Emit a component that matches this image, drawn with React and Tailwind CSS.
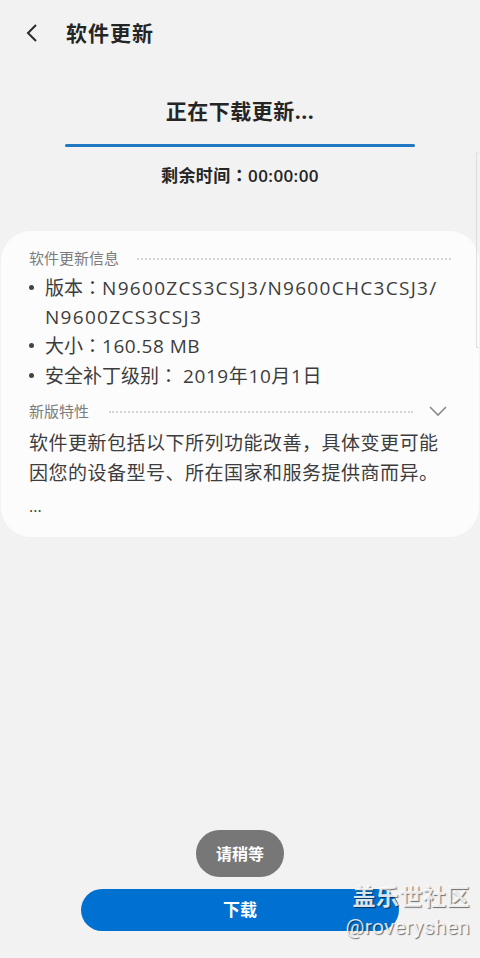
import React from 'react';

const FONT = { fontFamily: '"Open Sans", "Noto Sans CJK SC", sans-serif' };
const PUNCT = { fontFamily: '"Noto Sans CJK TC", sans-serif' };

const Dots = () => (
  <div className="flex-1 h-0 border-t-2 border-dotted border-[#d4d4d4] mt-[2px]" />
);

const Bullet = ({ children }) => (
  <div className="flex">
    <span className="w-[16px] shrink-0 flex pt-[12px]">
      <span className="w-[5px] h-[5px] rounded-full bg-[#444]" />
    </span>
    <span>{children}</span>
  </div>
);

const C = ({ children }) => <span style={PUNCT}>{children}</span>;

const App = () => {
  return (
    <div className="relative w-[480px] h-[958px] bg-[#f2f2f2] overflow-hidden text-[#252525]" style={FONT}>
      {/* header */}
      <div className="flex items-center h-[68px] pl-[25px]">
        <svg width="16" height="20" viewBox="0 0 16 20" className="mt-[-2px]">
          <path d="M11 2 L3 10 L11 18" fill="none" stroke="#2a2a2a" strokeWidth="2" />
        </svg>
        <span className="ml-[25px] text-[21px] font-bold tracking-[1px]">软件更新</span>
      </div>

      {/* status */}
      <div className="flex flex-col items-center">
        <div className="mt-[28px] text-[21px] font-bold leading-[30px] tracking-[0.5px]">正在下载更新...</div>
        <div className="mt-[18px] w-[350px] h-[3px] rounded-full bg-[#1f78c1]" />
        <div className="mt-[16px] text-[17px] font-semibold leading-[24px] tracking-[0.4px]">剩余时间<C>：</C>00:00:00</div>
      </div>

      {/* info card */}
      <div className="mt-[43px] mx-[1px] bg-[#fcfcfc] rounded-[30px] pl-[28px] pr-[28px] pt-[14px] pb-[18px] h-[306px]">
        <div className="flex items-center gap-[18px]">
          <span className="text-[15px] leading-[26px] text-[#7c7c7c]">软件更新信息</span>
          <Dots />
        </div>
        <div className="mt-[2px] text-[19px] leading-[28.5px] text-[#3c3c3c]">
          <Bullet>
            版本<C>：</C><span className="tracking-[1.3px]">N9600ZCS3CSJ3/N9600CHC3CSJ3/</span>
            <br />
            <span className="tracking-[1.3px]">N9600ZCS3CSJ3</span>
          </Bullet>
          <Bullet>大小<C>：</C><span className="tracking-[0.5px]">160.58 MB</span></Bullet>
          <Bullet>安全补丁级别<C>：</C> <span className="tracking-[0.6px]">2019年10月1日</span></Bullet>
        </div>
        <div className="mt-[8px] flex items-center gap-[20px]">
          <span className="text-[15px] leading-[26px] text-[#7c7c7c]">新版特性</span>
          <Dots />
          <svg width="18" height="12" viewBox="0 0 18 12" className="ml-[-4px] mr-[4px]">
            <path d="M1 2 L9 10 L17 2" fill="none" stroke="#8a8a8a" strokeWidth="1.6" />
          </svg>
        </div>
        <p className="mt-[4px] text-[19px] tracking-[0.5px] leading-[30px] text-[#3c3c3c]">
          软件更新包括以下所列功能改善，具体变更可能因您的设备型号、所在国家和服务提供商而异。
        </p>
        <div className="mt-[8px] text-[16px] leading-[20px] text-[#3c3c3c]">...</div>
      </div>

      {/* scroll indicator */}
      <div className="absolute right-[1px] top-[152px] w-[3px] h-[196px] rounded-full border border-[#dedede] border-r-0" />

      {/* toast */}
      <div className="absolute left-[196px] top-[830px] w-[88px] h-[47px] rounded-full bg-[#777777] flex items-center justify-center text-white text-[16px] font-bold">
        请稍等
      </div>

      {/* download button */}
      <div className="absolute left-[81px] top-[889px] w-[318px] h-[42px] rounded-full bg-[#0070d1] flex items-center justify-center text-white text-[17px] font-bold">
        下载
      </div>

      {/* watermark */}
      <div className="absolute right-[10px] top-[879px] flex flex-col items-end text-white/85" style={{ textShadow: '1px 1px 1px rgba(0,0,0,0.55)' }}>
        <span className="text-[23px] leading-[32px] font-bold tracking-[0.5px]" style={{ fontFamily: '"Noto Sans CJK SC", sans-serif' }}>盖乐世社区</span>
        <span className="text-[21px] leading-[28px] mt-[2px] tracking-[0.3px]" style={{ fontFamily: 'Roboto, sans-serif' }}>@roveryshen</span>
      </div>
    </div>
  );
};

export default App;
